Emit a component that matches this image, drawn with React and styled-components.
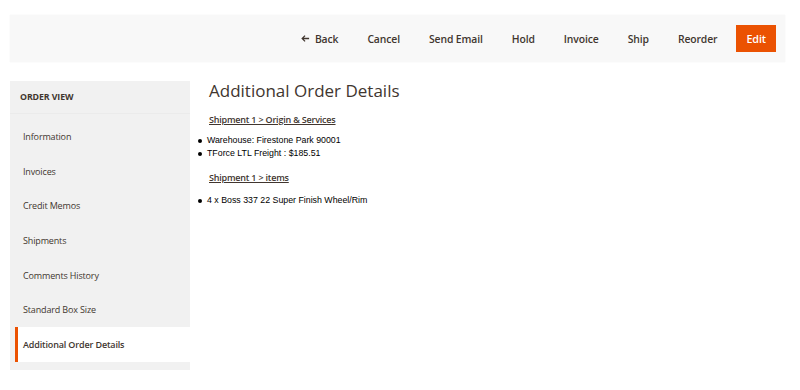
import React from "react";
import styled, { createGlobalStyle } from "styled-components";

const GlobalStyle = createGlobalStyle`
  html, body {
    margin: 0;
    padding: 0;
    background: #ffffff;
    font-family: "Open Sans", "Liberation Sans", sans-serif;
    color: #41362f;
  }
`;

const Page = styled.div`
  padding: 15px 15px 0 10px;
`;

const Toolbar = styled.div`
  display: flex;
  justify-content: flex-end;
  align-items: center;
  height: 47px;
  padding-right: 9px;
  background: #f8f8f8;
  box-shadow: 0 0 1px rgba(0, 0, 0, 0.08);
`;

const ToolButton = styled.button`
  display: flex;
  align-items: center;
  gap: 5px;
  height: 27px;
  padding: 0 14.5px;
  border: none;
  background: ${(p) => (p.$primary ? "#eb5202" : "transparent")};
  color: ${(p) => (p.$primary ? "#ffffff" : "#41362f")};
  font-family: inherit;
  font-size: 10.4px;
  letter-spacing: -0.12px;
  font-weight: 600;
  cursor: pointer;
  ${(p) => p.$primary && "padding: 0 10px; margin-left: 4.5px; font-size: 10.8px;"}
`;

const Body = styled.div`
  display: flex;
  gap: 19px;
  margin-top: 19px;
`;

const Sidebar = styled.nav`
  width: 180px;
  flex-shrink: 0;
  background: #f1f1f1;
`;

const SideHeader = styled.div`
  height: 32px;
  display: flex;
  align-items: center;
  padding-left: 10px;
  font-size: 8.8px;
  letter-spacing: -0.1px;
  font-weight: 700;
  text-transform: uppercase;
  border-bottom: 1px solid #ebebeb;
`;

const SideList = styled.ul`
  list-style: none;
  margin: 0;
  padding: 5px 0 8px 5px;
`;

const SideItem = styled.li`
  height: 34.7px;
  display: flex;
  align-items: center;
  padding-left: ${(p) => (p.$active ? "5px" : "8px")};
  font-size: 9px;
  letter-spacing: -0.15px;
  font-weight: ${(p) => (p.$active ? 600 : 400)};
  background: ${(p) => (p.$active ? "#ffffff" : "transparent")};
  border-left: ${(p) => (p.$active ? "3px solid #eb5202" : "none")};
`;

const Content = styled.main`
  flex: 1;
`;

const Title = styled.h1`
  margin: 0;
  font-size: 17px;
  font-weight: 400;
  line-height: 20px;
`;

const SectionLink = styled.a`
  display: block;
  font-size: 9px;
  letter-spacing: -0.2px;
  font-weight: 600;
  color: #41362f;
  text-decoration: underline;
  line-height: 14px;
  margin-top: ${(p) => p.$top || "9px"};
`;

const Bullets = styled.ul`
  margin: ${(p) => p.$top || "7px"} 0 0 -11px;
  padding-left: 0;
  list-style: none;
  font-family: "Liberation Sans", Arial, sans-serif;
  font-size: 8.8px;
  color: #000000;
`;

const Bullet = styled.li`
  display: flex;
  align-items: center;
  line-height: 13px;
  &::before {
    content: "";
    width: 4px;
    height: 4px;
    border-radius: 50%;
    background: #000;
    margin: 0 5px 0 0;
  }
`;

const ArrowLeft = () => (
  <svg width="9" height="9" viewBox="0 0 10 10" fill="none" stroke="#41362f" strokeWidth="1.4">
    <path d="M9 5H1.5M4.5 1.8 1.3 5l3.2 3.2" />
  </svg>
);

const menu = [
  "Information",
  "Invoices",
  "Credit Memos",
  "Shipments",
  "Comments History",
  "Standard Box Size",
  "Additional Order Details",
];

export default function App() {
  return (
    <Page>
      <GlobalStyle />
      <Toolbar>
        <ToolButton>
          <ArrowLeft />
          Back
        </ToolButton>
        <ToolButton>Cancel</ToolButton>
        <ToolButton>Send Email</ToolButton>
        <ToolButton>Hold</ToolButton>
        <ToolButton>Invoice</ToolButton>
        <ToolButton>Ship</ToolButton>
        <ToolButton>Reorder</ToolButton>
        <ToolButton $primary>Edit</ToolButton>
      </Toolbar>
      <Body>
        <Sidebar>
          <SideHeader>Order View</SideHeader>
          <SideList>
            {menu.map((m) => (
              <SideItem key={m} $active={m === "Additional Order Details"}>
                {m}
              </SideItem>
            ))}
          </SideList>
        </Sidebar>
        <Content>
          <Title>Additional Order Details</Title>
          <SectionLink $top="12px">Shipment 1 &gt; Origin &amp; Services</SectionLink>
          <Bullets $top="7px">
            <Bullet>Warehouse: Firestone Park 90001</Bullet>
            <Bullet>TForce LTL Freight : $185.51</Bullet>
          </Bullets>
          <SectionLink $top="11px">Shipment 1 &gt; items</SectionLink>
          <Bullets $top="9px">
            <Bullet>4 x Boss 337 22 Super Finish Wheel/Rim</Bullet>
          </Bullets>
        </Content>
      </Body>
    </Page>
  );
}
